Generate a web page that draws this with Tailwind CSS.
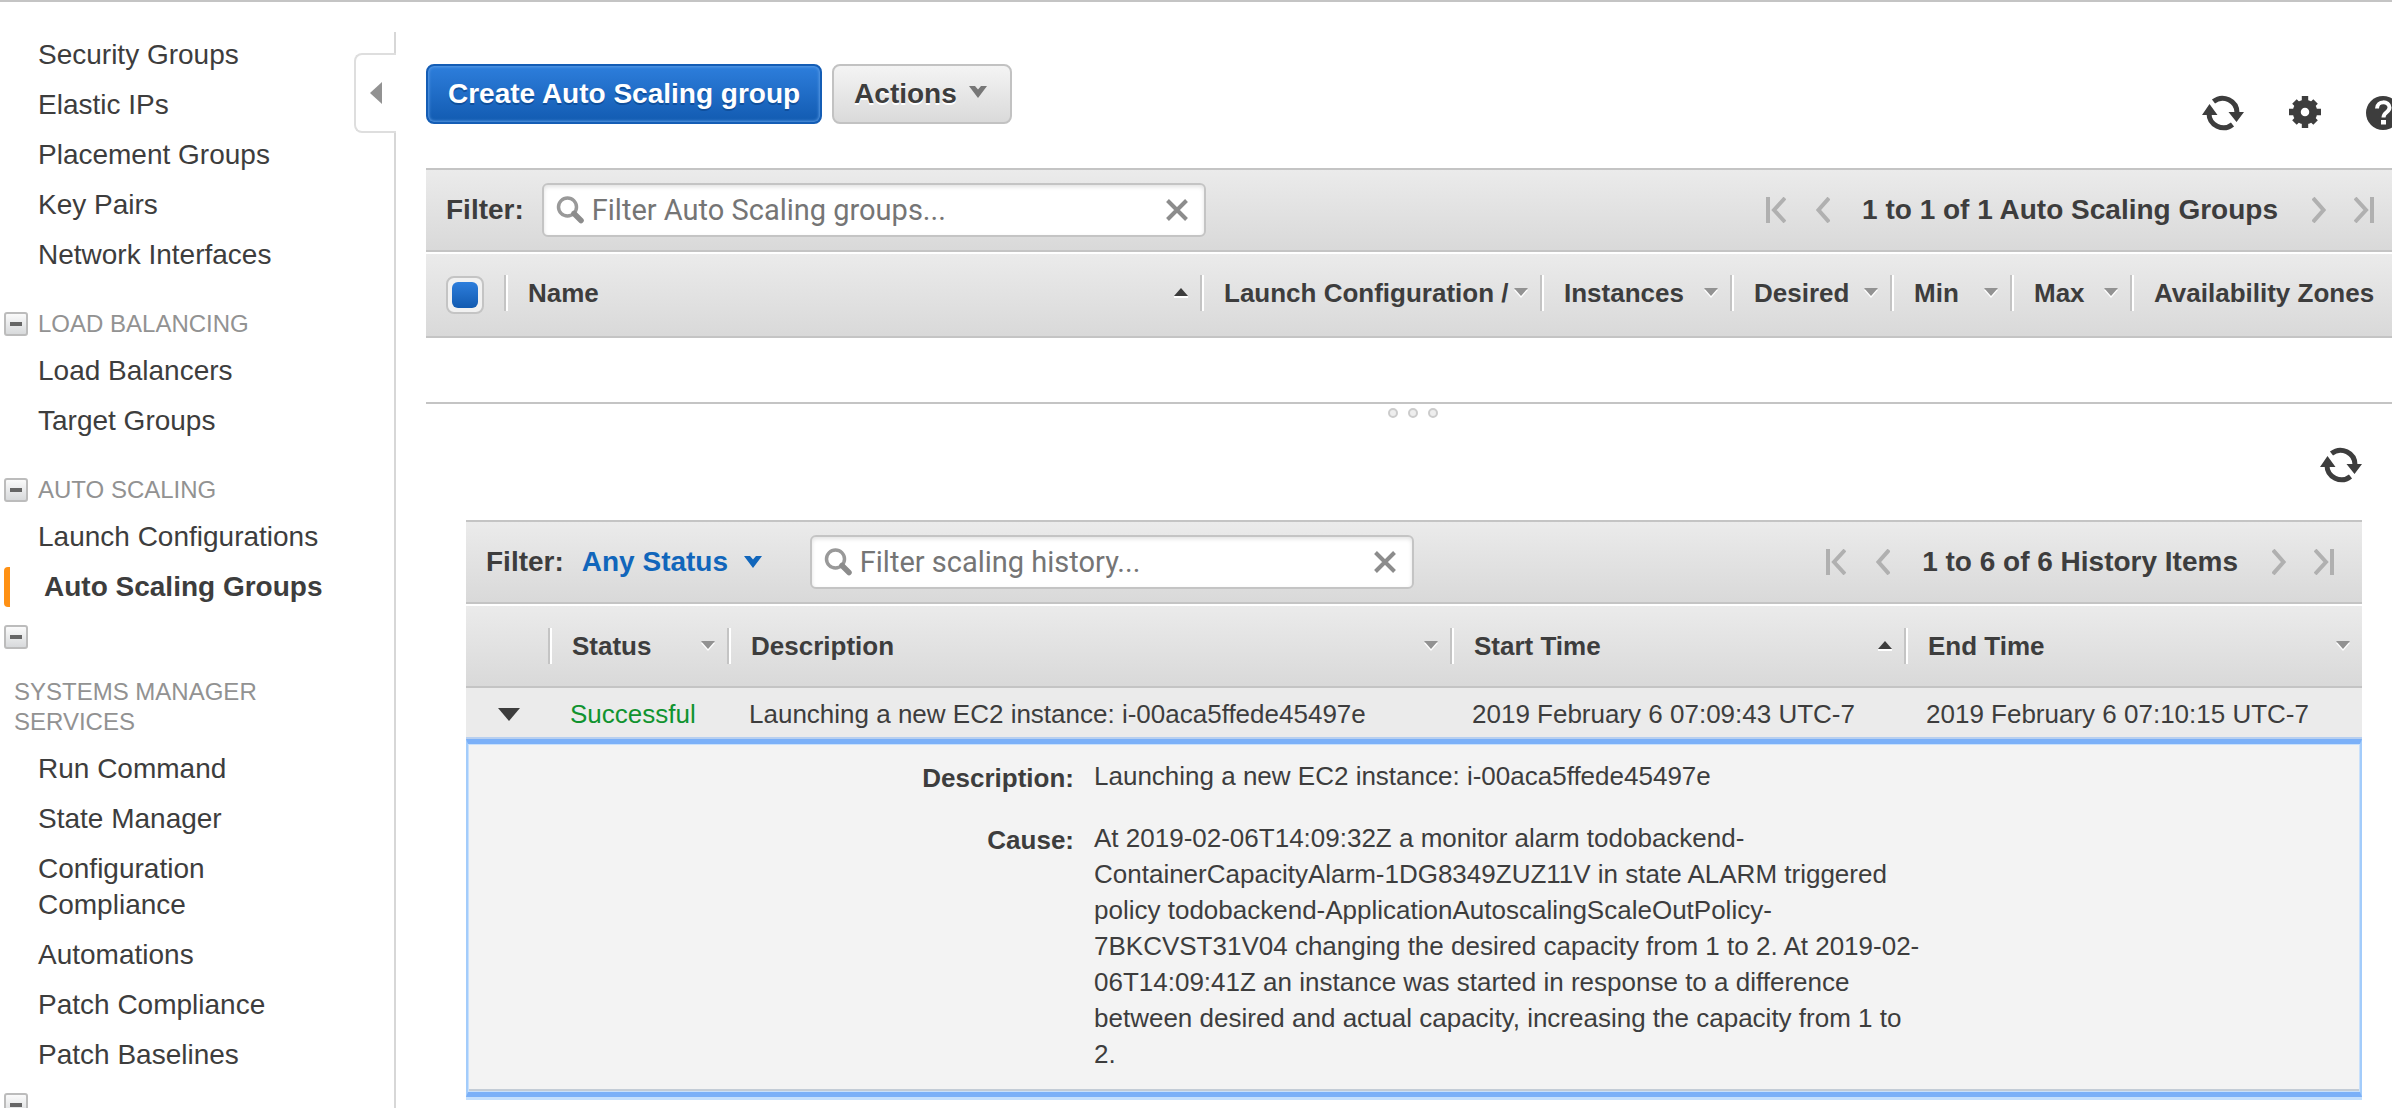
<!DOCTYPE html>
<html lang="en">
<head>
<meta charset="utf-8">
<title>EC2 Management Console</title>
<script src="https://cdn.jsdelivr.net/npm/@tailwindcss/browser@4"></script>
</head>
<body class="bg-white font-['Liberation_Sans',Arial,sans-serif] text-[#3d3d3d]">

<svg class="absolute size-0" aria-hidden="true">
  <defs><linearGradient id="boxfill" x1="0" y1="0" x2="0" y2="1"><stop offset="0" stop-color="#fcfcfc"/><stop offset="1" stop-color="#d6d8da"/></linearGradient></defs>
  <symbol id="minus" viewBox="0 0 24 24">
    <rect x="1" y="1" width="22" height="22" rx="2" fill="url(#boxfill)" stroke="#bcbcbc" stroke-width="2"/>
    <rect x="6" y="10" width="12" height="4" fill="#666"/>
  </symbol>
  <symbol id="refresh" viewBox="0 0 42 38">
    <g fill="none" stroke="#3d3d3d" stroke-width="5">
      <path d="M11.500 7.500A14.500 14.500 0 0 1 35 19"/>
      <path d="M30.500 30.500A14.500 14.500 0 0 1 7 19"/>
    </g>
    <path d="M26.500 18H42l-7.500 10zM0 21h15.500L7.500 10z" fill="#3d3d3d"/>
  </symbol>
  <symbol id="search" viewBox="0 0 28 28">
    <circle cx="11.500" cy="11" r="9" fill="none" stroke="#999" stroke-width="3.500"/>
    <path d="M18 17.500l7 7" stroke="#8c8c8c" stroke-width="5.500" stroke-linecap="round"/>
  </symbol>
  <symbol id="cross" viewBox="0 0 22 22"><path d="M1.500 1.500l19 19M20.500 1.500l-19 19" stroke="#8c8c8c" stroke-width="4"/></symbol>
  <symbol id="first" viewBox="0 0 20 26"><path d="M2 0v26M19 1L8 13l11 12" fill="none" stroke="#b0b0b0" stroke-width="4"/></symbol>
  <symbol id="prev" viewBox="0 0 14 26"><path d="M13 1L2.500 13L13 25" fill="none" stroke="#b0b0b0" stroke-width="4"/></symbol>
  <symbol id="next" viewBox="0 0 14 26"><path d="M1 1l10.500 12L1 25" fill="none" stroke="#b0b0b0" stroke-width="4"/></symbol>
  <symbol id="last" viewBox="0 0 20 26"><path d="M18 0v26M1 1l11 12L1 25" fill="none" stroke="#b0b0b0" stroke-width="4"/></symbol>
  <symbol id="down" viewBox="0 0 14 10"><path d="M0 2h14L7 10z" fill="#fff"/><path d="M0 0h14L7 8z" fill="#929292"/></symbol>
  <symbol id="up" viewBox="0 0 14 10"><path d="M0 8h14v2H0z" fill="#fff"/><path d="M0 8h14L7 0z" fill="#3d3d3d"/></symbol>
  <symbol id="chevron" viewBox="0 0 18 12"><path d="M0 0h6l3 3.500L12 0h6L9 12z" fill="currentColor"/></symbol>
</svg>

<div class="flex h-screen overflow-hidden border-t-2 border-[#c4c4c4]">

  <!-- Service navigation -->
  <aside class="relative w-[396px] shrink-0 pt-[30px]">
    <nav class="min-h-full border-r-2 border-[#d7d7d7] pt-[5px] text-[28px] leading-9" aria-label="EC2">
      <ul class="flex flex-col gap-3.5 pl-[38px]">
        <li><a href="#">Security Groups</a></li>
        <li><a href="#">Elastic IPs</a></li>
        <li><a href="#">Placement Groups</a></li>
        <li><a href="#">Key Pairs</a></li>
        <li><a href="#">Network Interfaces</a></li>
      </ul>
      <h2 class="mt-9 flex items-center gap-2.5 pl-1 text-[24px] leading-[30px] text-[#929292]">
        <button type="button" aria-label="Collapse Load Balancing"><svg class="size-6"><use href="#minus"/></svg></button>LOAD BALANCING
      </h2>
      <ul class="mt-3.5 flex flex-col gap-3.5 pl-[38px]">
        <li><a href="#">Load Balancers</a></li>
        <li><a href="#">Target Groups</a></li>
      </ul>
      <h2 class="mt-9 flex items-center gap-2.5 pl-1 text-[24px] leading-[30px] text-[#929292]">
        <button type="button" aria-label="Collapse Auto Scaling"><svg class="size-6"><use href="#minus"/></svg></button>AUTO SCALING
      </h2>
      <ul class="mt-3.5 flex flex-col gap-3">
        <li class="pl-[38px]"><a href="#">Launch Configurations</a></li>
        <li class="ml-1 flex h-10 items-center rounded-l border-l-6 border-[#ff9114] pl-[34px]"><a href="#" class="font-bold" aria-current="page">Auto Scaling Groups</a></li>
      </ul>
      <button type="button" class="mt-[18px] ml-1 block" aria-label="Collapse Systems Manager Services"><svg class="size-6"><use href="#minus"/></svg></button>
      <h2 class="mt-7 w-[280px] pl-3.5 text-[24px] leading-[30px] text-[#929292]">SYSTEMS MANAGER SERVICES</h2>
      <ul class="mt-3.5 flex w-[280px] flex-col gap-3.5 pl-[38px]">
        <li><a href="#">Run Command</a></li>
        <li><a href="#">State Manager</a></li>
        <li><a href="#">Configuration Compliance</a></li>
        <li><a href="#">Automations</a></li>
        <li><a href="#">Patch Compliance</a></li>
        <li><a href="#">Patch Baselines</a></li>
      </ul>
      <button type="button" class="mt-5 ml-1 block" aria-label="Collapse section"><svg class="size-6"><use href="#minus"/></svg></button>
    </nav>
    <button type="button" aria-label="Hide navigation" class="absolute top-[51px] right-0 flex h-20 w-[42px] items-center rounded-l-lg border-y-2 border-l-2 border-[#dedede] bg-white pl-3.5">
      <svg class="h-[22px] w-3" viewBox="0 0 12 22"><path d="M12 0v22L0 11z" fill="#929292"/></svg>
    </button>
  </aside>

  <main class="min-w-0 flex-1 overflow-hidden pt-[62px] pl-[30px]">

    <div class="flex h-[104px] items-start justify-between">
      <div class="flex gap-2.5">
        <button type="button" class="h-[60px] rounded-lg border-2 border-[#145db5] bg-gradient-to-b from-[#2d7edc] to-[#125bb1] px-5 text-[28px] font-bold text-white shadow-[inset_0_0_3px_1px_#5a9be4] text-shadow-[0_2px_0_#0f4f9c]">Create Auto Scaling group</button>
        <button type="button" class="flex h-[60px] w-[180px] items-center gap-3 rounded-lg border-2 border-[#c2c2c2] bg-gradient-to-b from-[#f4f4f4] to-[#dadada] px-5 text-[28px] font-bold text-shadow-[0_2px_0_#fff]">Actions<svg class="mb-1 h-3 w-[18px] text-[#777]"><use href="#chevron"/></svg></button>
      </div>
      <div class="-mr-2 flex shrink-0 items-center gap-[45px] pt-[30px]">
        <button type="button" aria-label="Refresh groups"><svg class="block h-[38px] w-[42px]"><use href="#refresh"/></svg></button>
        <button type="button" aria-label="Settings">
          <svg class="mb-0.5 block size-8" viewBox="-15 -15 30 30">
            <g fill="#3d3d3d">
              <circle r="11.500"/>
              <path d="M-3-15h6v30h-6zM-15-3h30v6h-30z"/>
              <path d="M-3-14h6v28h-6zM-14-3h28v6h-28z" transform="rotate(45)"/>
            </g>
            <circle r="4" fill="#fff"/>
          </svg>
        </button>
        <button type="button" aria-label="Help">
          <svg class="block size-[34px]" viewBox="0 0 34 34"><circle cx="17" cy="17" r="17" fill="#3d3d3d"/><path d="M11 12.500c0-8 12.500-8 12.500-1 0 5-6 4.500-6 10" fill="none" stroke="#fff" stroke-width="4"/><rect x="15" y="24" width="5" height="4.500" fill="#fff"/></svg>
        </button>
      </div>
    </div>

    <!-- Groups list -->
    <section aria-label="Auto Scaling groups">
      <div class="flex h-[84px] items-center justify-between border-y-2 border-[#c4c4c4] bg-gradient-to-b from-[#ebebeb] to-[#d9d9d9] pr-[18px] pl-5 text-[28px] leading-9">
        <div class="flex items-center gap-[18px]">
          <label for="group-filter" class="font-bold">Filter:</label>
          <div class="flex h-[54px] w-[664px] items-center rounded-md border-2 border-[#c4c4c4] bg-white pr-4 pl-3 shadow-[inset_0_2px_4px_#e2e2e2]">
            <svg class="mr-2 size-7 shrink-0"><use href="#search"/></svg>
            <input id="group-filter" type="text" placeholder="Filter Auto Scaling groups..." class="min-w-0 flex-1 bg-transparent font-[Roboto,sans-serif] text-[29px] outline-none placeholder:text-[#757575]">
            <button type="button" aria-label="Clear filter"><svg class="block size-[22px]"><use href="#cross"/></svg></button>
          </div>
        </div>
        <div class="flex items-center">
          <button type="button" aria-label="First page" class="mr-[30px]"><svg class="block h-[26px] w-5"><use href="#first"/></svg></button>
          <button type="button" aria-label="Previous page" class="mr-8"><svg class="block h-[26px] w-3.5"><use href="#prev"/></svg></button>
          <span class="font-bold">1 to 1 of 1 Auto Scaling Groups</span>
          <button type="button" aria-label="Next page" class="ml-[34px]"><svg class="block h-[26px] w-3.5"><use href="#next"/></svg></button>
          <button type="button" aria-label="Last page" class="ml-7"><svg class="block h-[26px] w-5"><use href="#last"/></svg></button>
        </div>
      </div>
      <table class="mt-0.5 w-full table-fixed border-separate border-spacing-0 text-[26px] leading-9">
        <colgroup><col class="w-[78px]"><col><col class="w-[340px]"><col class="w-[190px]"><col class="w-[160px]"><col class="w-[120px]"><col class="w-[120px]"><col class="w-[262px]"></colgroup>
        <thead>
          <tr class="h-[84px] text-left whitespace-nowrap [&>th]:border-b-2 [&>th]:border-[#c4c4c4] [&>th]:bg-gradient-to-b [&>th]:from-[#ebebeb] [&>th]:to-[#d9d9d9] [&>th]:p-0 [&>th]:pb-1">
            <th><input type="checkbox" checked aria-label="Select all groups" class="mt-1 ml-5 grid size-[38px] appearance-none place-content-center rounded-lg border-2 border-[#c4c4c4] bg-[#f1f1f1] before:size-[26px] before:rounded-md before:bg-gradient-to-b before:from-[#2d7edc] before:to-[#125bb1] before:content-['']"></th>
            <th><div class="flex h-9 items-center justify-between border-l-2 border-[#c4c4c4] pr-3 pl-[22px] shadow-[inset_2px_0_#fff]">Name<svg class="h-2.5 w-3.5"><use href="#up"/></svg></div></th>
            <th><div class="flex h-9 items-center justify-between border-l-2 border-[#c4c4c4] pr-3 pl-[22px] shadow-[inset_2px_0_#fff]">Launch Configuration /<svg class="h-2.5 w-3.5"><use href="#down"/></svg></div></th>
            <th><div class="flex h-9 items-center justify-between border-l-2 border-[#c4c4c4] pr-3 pl-[22px] shadow-[inset_2px_0_#fff]">Instances<svg class="h-2.5 w-3.5"><use href="#down"/></svg></div></th>
            <th><div class="flex h-9 items-center justify-between border-l-2 border-[#c4c4c4] pr-3 pl-[22px] shadow-[inset_2px_0_#fff]">Desired<svg class="h-2.5 w-3.5"><use href="#down"/></svg></div></th>
            <th><div class="flex h-9 items-center justify-between border-l-2 border-[#c4c4c4] pr-3 pl-[22px] shadow-[inset_2px_0_#fff]">Min<svg class="h-2.5 w-3.5"><use href="#down"/></svg></div></th>
            <th><div class="flex h-9 items-center justify-between border-l-2 border-[#c4c4c4] pr-3 pl-[22px] shadow-[inset_2px_0_#fff]">Max<svg class="h-2.5 w-3.5"><use href="#down"/></svg></div></th>
            <th><div class="flex h-9 items-center border-l-2 border-[#c4c4c4] pl-[22px] shadow-[inset_2px_0_#fff]">Availability Zones</div></th>
          </tr>
        </thead>
      </table>
    </section>

    <!-- Split pane handle -->
    <div class="mt-16 flex h-10 justify-center gap-2.5 border-t-2 border-[#c4c4c4] pt-1 pl-2" role="separator">
      <i class="size-2.5 rounded-full border-2 border-[#ccc] bg-[#eee]"></i>
      <i class="size-2.5 rounded-full border-2 border-[#ccc] bg-[#eee]"></i>
      <i class="size-2.5 rounded-full border-2 border-[#ccc] bg-[#eee]"></i>
    </div>

    <!-- Scaling history -->
    <section class="mr-[30px] ml-10" aria-label="Scaling history">
      <div class="flex h-[78px] justify-end pt-1">
        <button type="button" class="h-[38px]" aria-label="Refresh history"><svg class="block h-[38px] w-[42px]"><use href="#refresh"/></svg></button>
      </div>
      <div class="flex h-[84px] items-center justify-between border-y-2 border-[#c4c4c4] bg-gradient-to-b from-[#ebebeb] to-[#d9d9d9] pr-7 pl-5 text-[28px] leading-9">
        <div class="flex items-center">
          <span class="mr-[18px] font-bold">Filter:</span>
          <div class="relative mr-12">
            <select aria-label="Status" class="w-[180px] appearance-none bg-transparent font-bold text-[#1166bb]"><option>Any Status</option></select>
            <svg class="pointer-events-none absolute top-3 right-0 h-3 w-[18px] text-[#1166bb]"><use href="#chevron"/></svg>
          </div>
          <div class="flex h-[54px] w-[604px] items-center rounded-md border-2 border-[#c4c4c4] bg-white pr-4 pl-3 shadow-[inset_0_2px_4px_#e2e2e2]">
            <svg class="mr-2 size-7 shrink-0"><use href="#search"/></svg>
            <input type="text" aria-label="Filter scaling history" placeholder="Filter scaling history..." class="min-w-0 flex-1 bg-transparent font-[Roboto,sans-serif] text-[29px] outline-none placeholder:text-[#757575]">
            <button type="button" aria-label="Clear filter"><svg class="block size-[22px]"><use href="#cross"/></svg></button>
          </div>
        </div>
        <div class="flex items-center">
          <button type="button" aria-label="First page" class="mr-[30px]"><svg class="block h-[26px] w-5"><use href="#first"/></svg></button>
          <button type="button" aria-label="Previous page" class="mr-8"><svg class="block h-[26px] w-3.5"><use href="#prev"/></svg></button>
          <span class="font-bold">1 to 6 of 6 History Items</span>
          <button type="button" aria-label="Next page" class="ml-[34px]"><svg class="block h-[26px] w-3.5"><use href="#next"/></svg></button>
          <button type="button" aria-label="Last page" class="ml-7"><svg class="block h-[26px] w-5"><use href="#last"/></svg></button>
        </div>
      </div>
      <table class="mt-0.5 w-full table-fixed border-separate border-spacing-0 text-[26px] leading-9">
        <colgroup><col class="w-[82px]"><col class="w-[179px]"><col><col class="w-[454px]"><col class="w-[458px]"></colgroup>
        <thead>
          <tr class="h-[82px] text-left whitespace-nowrap [&>th]:border-b-2 [&>th]:border-[#c4c4c4] [&>th]:bg-gradient-to-b [&>th]:from-[#ebebeb] [&>th]:to-[#d9d9d9] [&>th]:p-0">
            <th></th>
            <th><div class="flex h-9 items-center justify-between border-l-2 border-[#c4c4c4] pr-3 pl-[22px] shadow-[inset_2px_0_#fff]">Status<svg class="h-2.5 w-3.5"><use href="#down"/></svg></div></th>
            <th><div class="flex h-9 items-center justify-between border-l-2 border-[#c4c4c4] pr-3 pl-[22px] shadow-[inset_2px_0_#fff]">Description<svg class="h-2.5 w-3.5"><use href="#down"/></svg></div></th>
            <th><div class="flex h-9 items-center justify-between border-l-2 border-[#c4c4c4] pr-3 pl-[22px] shadow-[inset_2px_0_#fff]">Start Time<svg class="h-2.5 w-3.5"><use href="#up"/></svg></div></th>
            <th><div class="flex h-9 items-center justify-between border-l-2 border-[#c4c4c4] pr-3 pl-[22px] shadow-[inset_2px_0_#fff]">End Time<svg class="h-2.5 w-3.5"><use href="#down"/></svg></div></th>
          </tr>
        </thead>
        <tbody>
          <tr class="bg-[#ebebeb] whitespace-nowrap [&>td]:p-0 [&>td]:pt-2 [&>td]:pb-[7px]">
            <td><button type="button" aria-label="Collapse details" class="ml-8 block"><svg class="block h-[13px] w-[22px]" viewBox="0 0 22 13"><path d="M0 0h22L11 13z" fill="#3d3d3d"/></svg></button></td>
            <td><span class="pl-[22px] text-[#10932f]">Successful</span></td>
            <td><span class="pl-[22px]">Launching a new EC2 instance: i-00aca5ffede45497e</span></td>
            <td><span class="pl-[22px]">2019 February 6 07:09:43 UTC-7</span></td>
            <td><span class="pl-[22px]">2019 February 6 07:10:15 UTC-7</span></td>
          </tr>
          <tr>
            <td colspan="5" class="p-0">
              <dl class="grid grid-cols-[606px_minmax(0,832px)] gap-x-5 gap-y-6 border-x-2 border-y-5 border-x-[#a3ccfb] border-y-[#7bb0f8] bg-[#f3f3f3] pt-3.5 pb-5 shadow-[0_-2px_0_#b7cff0,0_3px_0_#c5e0fd,inset_0_0_0_1px_#c8e0fb,inset_0_-3px_0_#c3ccd6]">
                <dt class="pt-0.5 text-right font-bold">Description:</dt>
                <dd>Launching a new EC2 instance: i-00aca5ffede45497e</dd>
                <dt class="pt-0.5 text-right font-bold">Cause:</dt>
                <dd>At 2019-02-06T14:09:32Z a monitor alarm todobackend-ContainerCapacityAlarm-1DG8349ZUZ11V in state ALARM triggered policy todobackend-ApplicationAutoscalingScaleOutPolicy-7BKCVST31V04 changing the desired capacity from 1 to 2. At 2019-02-06T14:09:41Z an instance was started in response to a difference between desired and actual capacity, increasing the capacity from 1 to 2.</dd>
              </dl>
            </td>
          </tr>
        </tbody>
      </table>
    </section>
  </main>
</div>
</body>
</html>
